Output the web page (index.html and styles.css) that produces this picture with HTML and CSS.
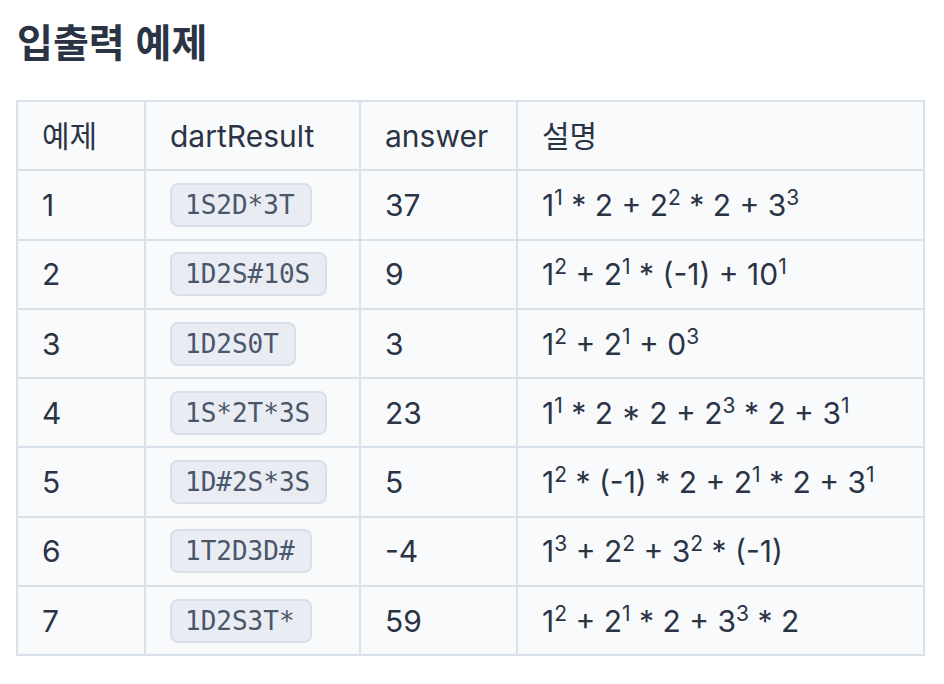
FILE: index.html
```html
<!DOCTYPE html>
<html lang="ko">
<head>
<meta charset="utf-8">
<title>입출력 예제</title>
<link rel="stylesheet" href="styles.css">
</head>
<body>
<main class="page">
  <h2 class="title">입출력 예제</h2>
  <table class="examples">
    <colgroup>
      <col class="c1"><col class="c2"><col class="c3"><col class="c4">
    </colgroup>
    <thead>
      <tr><th>예제</th><th>dartResult</th><th>answer</th><th>설명</th></tr>
    </thead>
    <tbody>
      <tr><td>1</td><td><code>1S2D*3T</code></td><td>37</td><td>1<sup>1</sup> * 2 + 2<sup>2</sup> * 2 + 3<sup>3</sup></td></tr>
      <tr><td>2</td><td><code>1D2S#10S</code></td><td>9</td><td>1<sup>2</sup> + 2<sup>1</sup> * (-1) + 10<sup>1</sup></td></tr>
      <tr><td>3</td><td><code>1D2S0T</code></td><td>3</td><td>1<sup>2</sup> + 2<sup>1</sup> + 0<sup>3</sup></td></tr>
      <tr><td>4</td><td><code>1S*2T*3S</code></td><td>23</td><td>1<sup>1</sup> * 2 * 2 + 2<sup>3</sup> * 2 + 3<sup>1</sup></td></tr>
      <tr><td>5</td><td><code>1D#2S*3S</code></td><td>5</td><td>1<sup>2</sup> * (-1) * 2 + 2<sup>1</sup> * 2 + 3<sup>1</sup></td></tr>
      <tr><td>6</td><td><code>1T2D3D#</code></td><td>-4</td><td>1<sup>3</sup> + 2<sup>2</sup> + 3<sup>2</sup> * (-1)</td></tr>
      <tr><td>7</td><td><code>1D2S3T*</code></td><td>59</td><td>1<sup>2</sup> + 2<sup>1</sup> * 2 + 3<sup>3</sup> * 2</td></tr>
    </tbody>
  </table>
</main>
</body>
</html>
```

FILE: styles.css
```css
html, body {
  margin: 0;
  padding: 0;
  background: #ffffff;
}

.page {
  padding: 12px 20px 0 16px;
  font-family: "Inter", "Noto Sans CJK KR", sans-serif;
  color: #2b3444;
}

.title {
  margin: 0 0 32px 1px;
  font-family: "Noto Sans CJK KR", sans-serif;
  font-size: 39px;
  font-weight: 700;
  line-height: 56px;
  color: #2b3444;
}

.examples {
  width: 907px;
  table-layout: fixed;
  border-collapse: collapse;
  background: #f9fafc;
  font-size: 30px;
}

.c1 { width: 128px; }
.c2 { width: 215px; }
.c3 { width: 157px; }
.c4 { width: 407px; }

.examples tr {
  height: 69.3px;
}

.examples th,
.examples td {
  border: 2px solid #d9e1ea;
  padding: 0 24px;
  line-height: 36px;
  text-align: left;
  vertical-align: middle;
  font-weight: 400;
  white-space: nowrap;
}

.examples code {
  display: inline-block;
  vertical-align: middle;
  height: 40px;
  line-height: 40px;
  padding: 0 15px 0 13px;
  border: 2px solid #d9dfe9;
  border-radius: 8px;
  background: #e9ecf3;
  color: #4a5669;
  font-family: "DejaVu Sans Mono", monospace;
  font-size: 26px;
}

.examples sup {
  font-size: 21px;
  line-height: 0;
  vertical-align: 11px;
}
```
